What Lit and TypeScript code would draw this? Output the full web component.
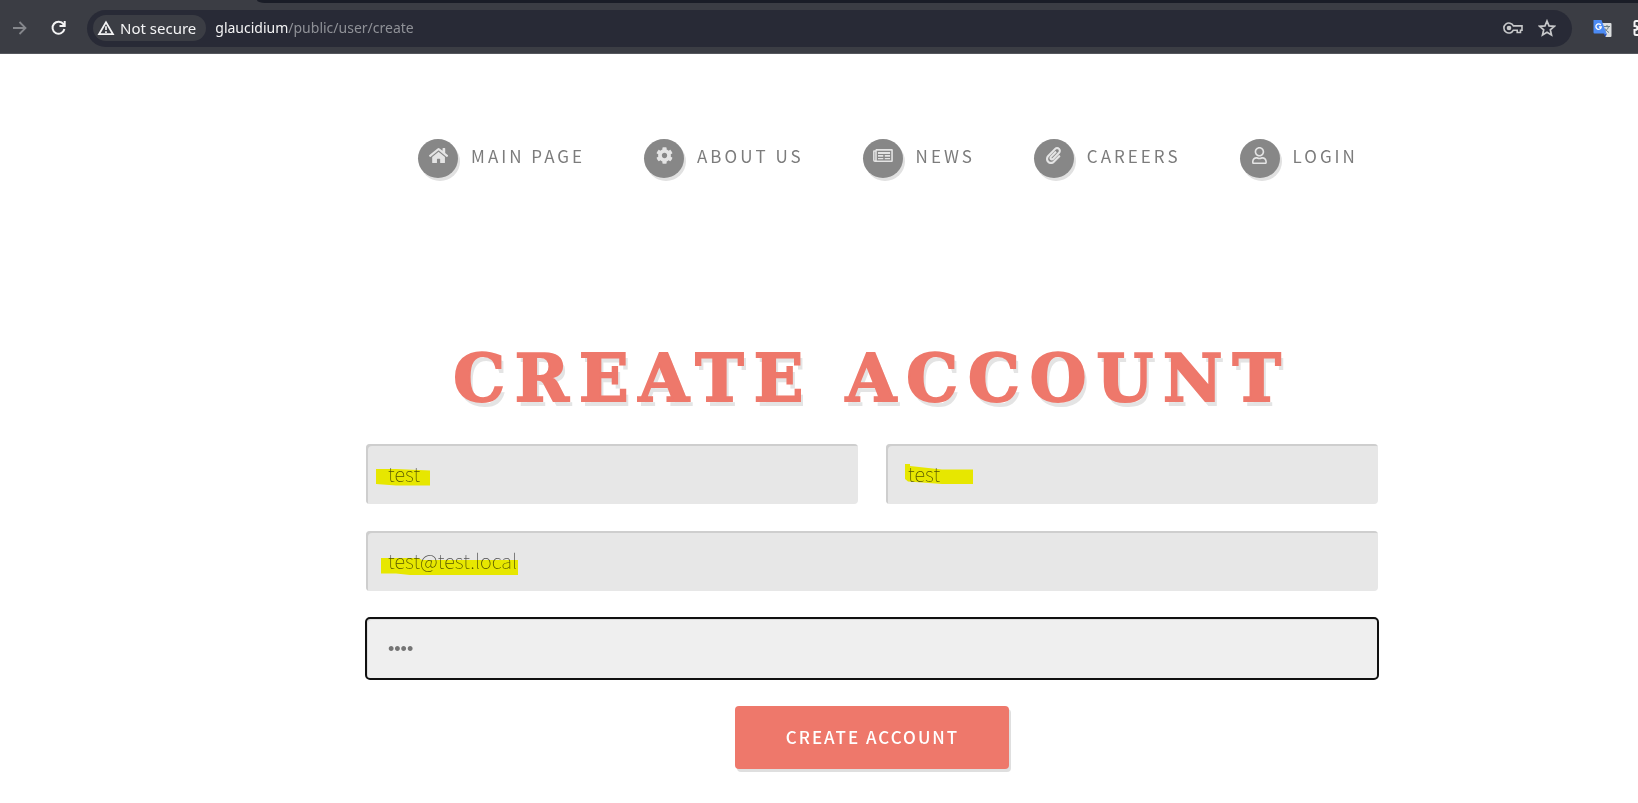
import { LitElement, html, svg, css } from "lit";
import { customElement } from "lit/decorators.js";

const ICONS = {
  home: {
    w: 576,
    d: "M280.37 148.26L96 300.11V464a16 16 0 0 0 16 16l112.06-.29a16 16 0 0 0 15.92-16V368a16 16 0 0 1 16-16h64a16 16 0 0 1 16 16v95.64a16 16 0 0 0 16 16.05L464 480a16 16 0 0 0 16-16V300L295.67 148.26a12.19 12.19 0 0 0-15.3 0zM571.6 251.47L488 182.56V44.05a12 12 0 0 0-12-12h-56a12 12 0 0 0-12 12v72.61L318.47 43a48 48 0 0 0-61 0L4.34 251.47a12 12 0 0 0-1.6 16.9l25.5 31A12 12 0 0 0 45.15 301l235.22-193.74a12.19 12.19 0 0 1 15.3 0L530.9 301a12 12 0 0 0 16.9-1.6l25.5-31a12 12 0 0 0-1.7-16.93z",
  },
  cog: {
    w: 512,
    d: "M487.4 315.7l-42.6-24.6c4.3-23.2 4.3-47 0-70.2l42.6-24.6c4.9-2.8 7.1-8.6 5.5-14-11.1-35.6-30-67.8-54.7-94.6-3.8-4.1-10-5.1-14.8-2.3L380.8 110c-17.9-15.4-38.5-27.3-60.8-35.1V25.8c0-5.6-3.9-10.5-9.4-11.7-36.7-8.2-74.3-7.8-109.2 0-5.5 1.2-9.4 6.1-9.4 11.7V75c-22.2 7.9-42.8 19.8-60.8 35.1L88.7 85.5c-4.9-2.8-11-1.9-14.8 2.3-24.7 26.7-43.6 58.9-54.7 94.6-1.7 5.4.6 11.2 5.5 14L67.3 221c-4.3 23.2-4.3 47 0 70.2l-42.6 24.6c-4.9 2.8-7.1 8.6-5.5 14 11.1 35.6 30 67.8 54.7 94.6 3.8 4.1 10 5.1 14.8 2.3l42.6-24.6c17.9 15.4 38.5 27.3 60.8 35.1v49.2c0 5.6 3.9 10.5 9.4 11.7 36.7 8.2 74.3 7.8 109.2 0 5.5-1.2 9.4-6.1 9.4-11.7v-49.2c22.2-7.9 42.8-19.8 60.8-35.1l42.6 24.6c4.9 2.8 11 1.9 14.8-2.3 24.7-26.7 43.6-58.9 54.7-94.6 1.5-5.5-.7-11.3-5.6-14.1zM256 336c-44.1 0-80-35.9-80-80s35.9-80 80-80 80 35.9 80 80-35.9 80-80 80z",
  },
  newspaper: {
    w: 600,
    d: "M552 60H112c-21 0-39 13-45 36H30c-16 0-28 12-28 28v268c0 32 25 60 58 60h510c16 0 28-12 28-28V88c0-16-12-28-28-28zM48 394V146h18v248c0 5-4 9-9 9s-9-4-9-9zM550 404H114V110h436zM150 150h364v58H150zM150 244h160v46H150zM354 244h160v46H354zM150 328h160v44H150zM354 328h160v44H354z",
  },
  paperclip: {
    w: 448,
    d: "M43.246 466.142c-58.43-60.289-57.341-157.511 1.386-217.581L254.392 34c44.316-45.332 116.351-45.336 160.671 0 43.89 44.894 43.943 117.329 0 162.276L232.214 383.128c-29.855 30.537-78.633 30.111-107.982-.998-28.275-29.97-27.368-77.473 1.452-106.953l143.743-146.835c6.182-6.314 16.312-6.422 22.626-.241l22.861 22.379c6.315 6.182 6.422 16.312.241 22.626L171.427 319.927c-4.932 5.045-5.236 13.428-.648 18.292 4.372 4.634 11.245 4.711 15.688.165l182.849-186.851c19.613-20.062 19.613-52.725-.011-72.798-19.189-19.627-49.957-19.637-69.154 0L90.39 293.295c-34.763 35.56-35.299 93.12-1.191 128.313 34.01 35.093 88.985 35.137 123.058.286l172.06-175.999c6.177-6.319 16.307-6.433 22.626-.256l22.877 22.364c6.319 6.177 6.434 16.307.256 22.626l-172.06 175.998c-59.576 60.938-155.943 60.216-214.77-.485z",
  },
  user: {
    w: 448,
    d: "M313.6 304c-28.7 0-42.5 16-89.6 16-47.1 0-60.8-16-89.6-16C60.2 304 0 364.2 0 438.4V464c0 26.5 21.5 48 48 48h352c26.5 0 48-21.5 48-48v-25.6c0-74.2-60.2-134.4-134.4-134.4zM400 464H48v-25.6c0-47.6 38.8-86.4 86.4-86.4 14.6 0 38.3 16 89.6 16 51.7 0 74.9-16 89.6-16 47.6 0 86.4 38.8 86.4 86.4V464zM224 288c79.5 0 144-64.5 144-144S303.5 0 224 0 80 64.5 80 144s64.5 144 144 144zm0-240c52.9 0 96 43.1 96 96s-43.1 96-96 96-96-43.1-96-96 43.1-96 96-96z",
  },
};

const NAV: { icon: keyof typeof ICONS; label: string }[] = [
  { icon: "home", label: "Main Page" },
  { icon: "cog", label: "About Us" },
  { icon: "newspaper", label: "News" },
  { icon: "paperclip", label: "Careers" },
  { icon: "user", label: "Login" },
];

@customElement("browser-bar")
class BrowserBar extends LitElement {
  static styles = css`
    :host {
      display: block;
      font-family: "Noto Sans", sans-serif;
      font-size: 15px;
      line-height: 20px;
    }
    .tabs {
      display: flex;
      height: 3px;
      background: #3b3d44;
    }
    .tabs::after {
      content: "";
      flex: 1;
      margin-left: 257px;
      background: #1a1d27;
      border-bottom-left-radius: 8px 3px;
    }
    .bar {
      display: flex;
      align-items: center;
      height: 50px;
      overflow: hidden;
      background: #3b3d44;
      border-bottom: 1px solid #55575d;
    }
    button {
      display: flex;
      flex: none;
      padding: 0;
      border: 0;
      background: none;
      color: inherit;
      font: inherit;
    }
    .forward {
      margin-left: 10px;
      color: #85878c;
    }
    .reload {
      margin-left: 20px;
      color: #f4f4f5;
    }
    .address {
      display: flex;
      flex: 1;
      align-items: center;
      box-sizing: border-box;
      height: 37px;
      margin-left: 18px;
      padding: 0 16px 0 6px;
      border-radius: 19px;
      background: #282a36;
      color: #8f9197;
    }
    .chip {
      align-items: center;
      gap: 5px;
      height: 26px;
      margin-right: 9px;
      padding: 0 10px 0 4px;
      border-radius: 13px;
      background: #3b3d44;
      color: #f4f4f5;
    }
    .url {
      flex: 1;
      font-size: 14px;
    }
    .host {
      color: #f4f4f5;
    }
    .key,
    .star {
      color: #c7c8ca;
    }
    .star {
      margin-left: 15px;
    }
    .translate {
      margin-left: 20px;
    }
    .extensions {
      width: 5px;
      overflow: hidden;
      margin-left: 20px;
      color: #f4f4f5;
    }
    svg {
      flex: none;
      display: block;
    }
  `;

  render() {
    return html`
      <div class="tabs"></div>
      <div class="bar">
        <button class="forward" aria-label="Forward">
          <svg width="18" height="18" viewBox="0 0 18 18" fill="none" stroke="currentColor" stroke-width="1.800">
            <path d="M3 9h12M9.500 3l6 6-6 6" />
          </svg>
        </button>
        <button class="reload" aria-label="Reload">
          <svg width="21" height="18" viewBox="0 0 21 18" fill="none" stroke="currentColor" stroke-width="2">
            <path d="M15.500 5.300A6 6 0 1 0 16.400 10M16.700 2v5h-5.200" />
            <path d="M16.700 3.500v3.500h-3.500z" fill="currentColor" stroke="none" />
          </svg>
        </button>
        <div class="address">
          <button class="chip">
            <svg width="18" height="16" viewBox="0 0 18 16" fill="none" stroke="currentColor" stroke-width="1.700">
              <path d="M9 2.300L16 14.200H2z" />
              <path d="M9 6.300v3.700M9 11.200v1.700" />
            </svg>
            Not secure
          </button>
          <span class="url"><span class="host">glaucidium</span>/public/user/create</span>
          <button class="key" aria-label="Passwords">
            <svg width="20" height="14" viewBox="0 0 20 14" fill="none" stroke="currentColor" stroke-width="1.600">
              <path d="M10.400 4.900H19v4.300h-1.500v2.300h-3.300V9.200h-3.800A5 5 0 1 1 10.400 4.900z" />
              <circle cx="6" cy="7" r="2.300" fill="currentColor" stroke="none" />
            </svg>
          </button>
          <button class="star" aria-label="Bookmark">
            <svg width="18" height="18" viewBox="0 0 18 18" fill="none" stroke="currentColor" stroke-width="1.700">
              <path d="M9 2l2 4.900 5.300.4-4 3.500 1.200 5.200L9 13.200 4.500 16l1.200-5.200-4-3.500L7 6.900z" />
            </svg>
          </button>
        </div>
        <button class="translate" aria-label="Translate">
          <svg width="21" height="19" viewBox="0 0 20 19">
            <path d="M9 4h9a1 1 0 0 1 1 1v12a1 1 0 0 1-1 1h-5z" fill="#dcdedf" />
            <path d="M11.500 7.500h6M14.500 6v1.500M16 7.500c-.5 2.500-2 4-4 5M12.500 9.500c1 2 2.500 3 4 4" fill="none" stroke="#6d8085" />
            <path d="M11 14.500h3.500L13 18z" fill="#2a56c6" />
            <path d="M1 1h8l5 13.500H2a1 1 0 0 1-1-1z" fill="#4c8bf5" />
            <path d="M8.300 6a2.700 2.700 0 1 0 .5 2H6.500" fill="none" stroke="#fff" stroke-width="1.300" />
          </svg>
        </button>
        <button class="extensions" aria-label="Extensions">
          <svg width="18" height="18" viewBox="0 0 18 18" fill="none" stroke="currentColor" stroke-width="2">
            <path d="M7 2H3a1.500 1.500 0 0 0-1.500 1.500V7c2 0 3 1 3 2s-1 2-3 2v3.500A1.500 1.500 0 0 0 3 16h12V2z" />
          </svg>
        </button>
      </div>
    `;
  }
}

@customElement("site-nav")
class SiteNav extends LitElement {
  static styles = css`
    :host {
      display: block;
    }
    nav {
      display: flex;
      flex-wrap: wrap;
      justify-content: center;
      gap: 20px 59px;
    }
    a {
      display: flex;
      gap: 13px;
      color: #7c7c7c;
      font-size: 17px;
      line-height: 34px;
      letter-spacing: 3px;
      text-decoration: none;
      text-transform: uppercase;
    }
    .disc {
      display: flex;
      align-items: center;
      justify-content: center;
      box-sizing: border-box;
      width: 40px;
      height: 39px;
      padding-bottom: 6px;
      border-radius: 50%;
      background: #878787;
      box-shadow: 2px 3px 0 #e1e1e1;
    }
    svg {
      height: 17px;
      fill: #e4e4e4;
    }
  `;

  render() {
    return html`
      <nav>
        ${NAV.map(({ icon, label }) => {
          const { w, d } = ICONS[icon];
          return html`<a href="#">
            <span class="disc"
              ><svg viewBox="0 0 ${w} 512" fill-rule="evenodd" aria-hidden="true">${svg`<path d=${d} />`}</svg></span
            >
            <span>${label}</span>
          </a>`;
        })}
      </nav>
    `;
  }
}

@customElement("account-form")
class AccountForm extends LitElement {
  static styles = css`
    :host {
      display: block;
    }
    h1 {
      margin: 0;
      color: #ee786b;
      font-family: "DejaVu Serif", serif;
      font-size: 65px;
      font-weight: 700;
      line-height: 80px;
      letter-spacing: 10px;
      text-align: center;
      text-transform: uppercase;
      text-shadow: 3px 5px 0 #e4e4e4;
      -webkit-text-stroke: 2px #ee786b;
    }
    form {
      display: grid;
      grid-template-columns: 1fr 1fr;
      gap: 27px 28px;
      margin-top: 26px;
    }
    .field {
      position: relative;
      display: flex;
    }
    .wide {
      grid-column: 1 / -1;
    }
    input {
      box-sizing: border-box;
      width: 100%;
      height: 60px;
      padding: 0 22px 2px;
      border: 0;
      border-radius: 4px;
      background: #e7e7e7;
      box-shadow: inset 2px 2px 0 #cecece;
      color: #555;
      font-family: inherit;
      font-size: 20px;
      font-weight: 100;
    }
    .password {
      height: 61px;
      padding: 2px 22px 0;
      outline: 2px solid #101010;
      outline-offset: -1px;
      background: #efefef;
      box-shadow: inset 2px 2px 0 #dcdcdc;
      color: #757575;
      font-family: "Liberation Sans", sans-serif;
      font-size: 18px;
      font-weight: 400;
    }
    .marker {
      position: absolute;
      top: 20px;
      left: 10px;
      fill: #ff0;
      mix-blend-mode: multiply;
      pointer-events: none;
    }
    button {
      grid-column: 1 / -1;
      justify-self: center;
      height: 63px;
      padding: 0 50px 3px 51px;
      border: 0;
      border-radius: 4px;
      background: #ee786b;
      box-shadow: 2px 3px 0 #dfdfdf;
      color: #fff;
      font-family: inherit;
      font-size: 17px;
      font-weight: 500;
      letter-spacing: 2px;
      text-transform: uppercase;
    }
  `;

  render() {
    return html`
      <h1>Create Account</h1>
      <form>
        <div class="field">
          <input type="text" aria-label="First name" .value=${"test"} />
          <svg class="marker" width="140" height="30"><path d="M0 5H20L54 6.500V21.500H20L0 20z" /></svg>
        </div>
        <div class="field">
          <input type="text" aria-label="Last name" .value=${"test"} />
          <svg class="marker" width="140" height="30"><path d="M9 0h5v2L46 5.500H77V20H46L12 17.500L9 15z" /></svg>
        </div>
        <div class="field wide">
          <input type="text" aria-label="Email" .value=${"test@test.local"} />
          <svg class="marker" width="160" height="30"><path d="M5 7H42L46 9H142V24H34L20 22.500H5z" /></svg>
        </div>
        <div class="field wide">
          <input class="password" type="password" aria-label="Password" .value=${"test"} />
        </div>
        <button type="button">Create Account</button>
      </form>
    `;
  }
}

@customElement("app-root")
class AppRoot extends LitElement {
  static styles = css`
    :host {
      display: block;
      min-height: 100vh;
      background: #fff;
      font-family: "Noto Sans CJK JP", "Noto Sans", sans-serif;
    }
    .page {
      padding: 85px 0 35px 106px;
    }
    .menu {
      padding-left: 32px;
    }
    .account {
      max-width: 1012px;
      margin: 160px auto 0;
    }
  `;

  render() {
    return html`
      <browser-bar></browser-bar>
      <div class="page">
        <site-nav class="menu"></site-nav>
        <main class="account"><account-form></account-form></main>
      </div>
    `;
  }
}
